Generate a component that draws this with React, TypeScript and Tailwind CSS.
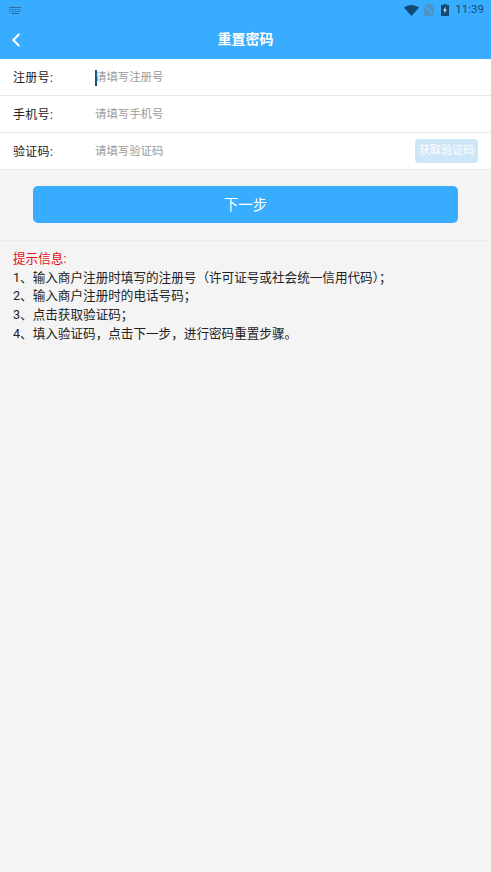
import { ChevronLeft } from 'lucide-react';

const fields = [
  { label: '注册号:', hint: '请填写注册号', cursor: true },
  { label: '手机号:', hint: '请填写手机号' },
  { label: '验证码:', hint: '请填写验证码', code: true },
];

const tips = [
  '1、输入商户注册时填写的注册号（许可证号或社会统一信用代码）；',
  '2、输入商户注册时的电话号码；',
  '3、点击获取验证码；',
  '4、填入验证码，点击下一步，进行密码重置步骤。',
];

const StatusBar = () => (
  <div className="h-[19px] flex items-center justify-between pl-[9px] pr-[7px] pt-px">
    <svg width="12" height="7" viewBox="0 0 12 7" fill="#2a6f9e">
      <rect x="0" y="0" width="12" height="1" strokeDasharray="1 1" />
      <path d="M0 2.500h12M0 4.500h12" stroke="#2a6f9e" strokeDasharray="1 0.500" />
      <rect x="2" y="6" width="8" height="1" />
    </svg>
    <div className="flex items-center">
      <svg width="15" height="11" viewBox="0 0 15 11" fill="#134a73" className="mr-[5px]">
        <path d="M0 2.600C2 .9 4.600 0 7.500 0s5.500.9 7.500 2.600L7.500 11z" />
      </svg>
      <svg width="10" height="12" viewBox="0 0 10 12" className="mr-[7px]">
        <path d="M0 0h6.500L10 3.500V12H0z" fill="#4f93c6" />
        <path d="M0 1l10 10" stroke="#38acff" strokeWidth="1.200" />
      </svg>
      <svg width="8" height="12" viewBox="0 0 8 12" className="mr-[6px]">
        <path d="M2.500 0h3v1H8v11H0V1h2.500z" fill="#134a73" />
        <path d="M4.600 2.500L2.300 6.800h1.500L3.300 9.800l2.400-4.300H4.200z" fill="#d7ecfb" />
      </svg>
      <span className="text-[11.500px] leading-none text-[#134a73]">11:39</span>
    </div>
  </div>
);

export default function App() {
  return (
    <div
      className="min-h-[872px] bg-[#f4f4f4] text-[#222222]"
      style={{ fontFamily: 'Roboto, "Noto Sans CJK SC", sans-serif' }}
    >
      <div className="h-[59px] bg-[#38acff]">
        <StatusBar />
        <div className="h-[40px] flex items-center relative justify-center">
          <ChevronLeft size={22} strokeWidth={2.2} className="absolute left-[5px] top-[10px] text-white" />
          <span className="text-[14px] font-bold text-white pt-px">重置密码</span>
        </div>
      </div>

      <div className="bg-white">
        {fields.map((f) => (
          <div key={f.label} className="h-[37px] flex items-center border-b border-[#e8e8e8] pl-[13px] pr-[13px] pt-[2px]">
            <span className="w-[82px] text-[12px] tracking-[0.3px]">{f.label}</span>
            <div className="flex-1 flex items-center text-[11.400px] text-[#9a9a9a]">
              {f.cursor && <span className="w-[2px] h-[16px] bg-[#17507a] -mr-[2px]" />}
              {f.hint}
            </div>
            {f.code && (
              <span className="w-[63px] h-[24px] -mt-[2px] flex items-center justify-center rounded-[4px] bg-[#cde6f8] text-[11px] text-white">
                获取验证码
              </span>
            )}
          </div>
        ))}
      </div>

      <div className="h-[71px] px-[33px] pb-[2px] flex items-center justify-center border-b border-[#ececec]">
        <button className="w-full h-[37px] pt-[4px] rounded-[5px] bg-[#38acff] text-white text-[14.500px]">下一步</button>
      </div>

      <div className="px-[13px] pt-[9px] text-[12.600px] leading-[18.700px]">
        <p className="text-[#e0101a]">提示信息:</p>
        {tips.map((t) => (
          <p key={t}>{t}</p>
        ))}
      </div>
    </div>
  );
}
